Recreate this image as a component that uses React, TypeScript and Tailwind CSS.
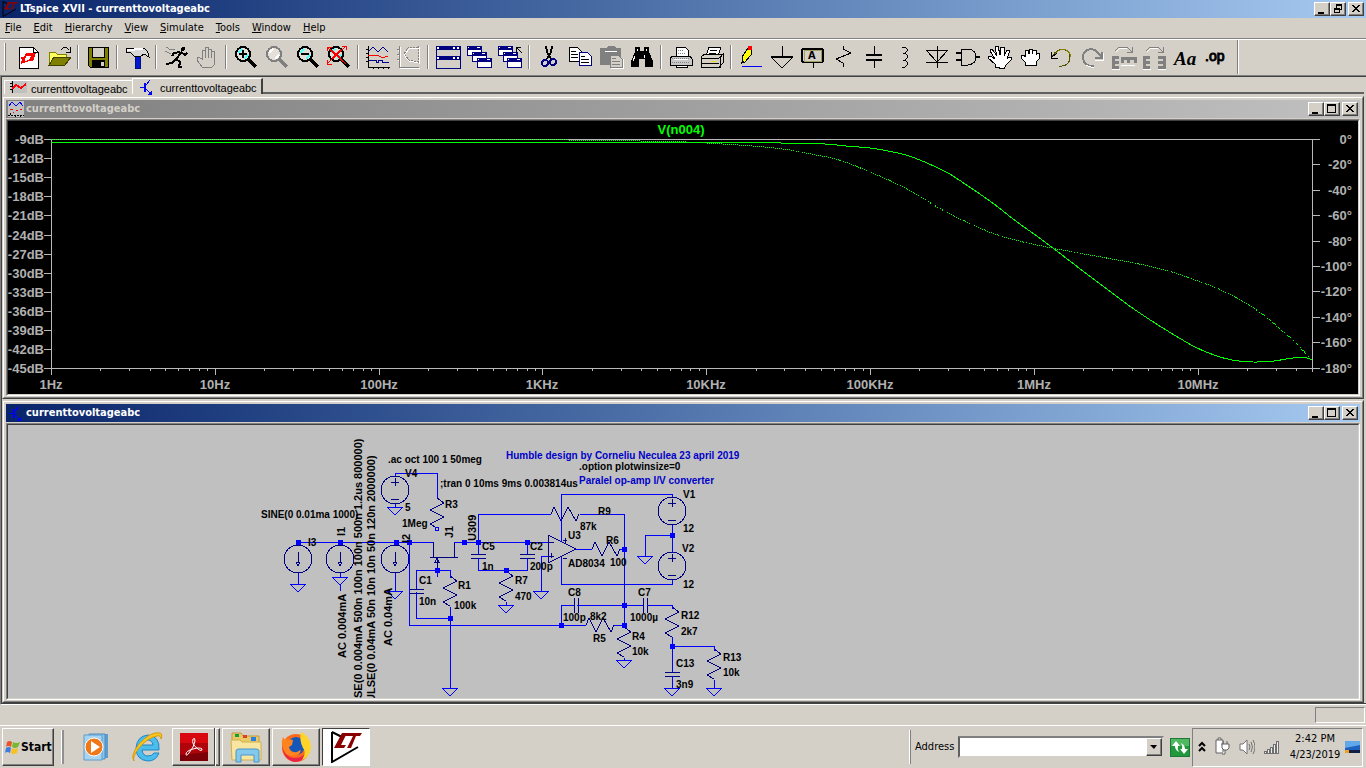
import type { ReactNode } from "react";

const raised =
  "bg-[#d4d0c8] border border-t-white border-l-white border-r-[#404040] border-b-[#404040] shadow-[inset_-1px_-1px_0_#808080]";

const menuItems = ["File", "Edit", "Hierarchy", "View", "Simulate", "Tools", "Window", "Help"];

const Lens = ({ color = "#000", tint = "#5ff", children }: { color?: string; tint?: string; children?: ReactNode }) => (
  <>
    <circle cx="9" cy="9" r="7" fill="#e4e0d8" stroke={color} strokeWidth="2" />
    <path d="M4 8l4-4M10 14l4-4" stroke={tint} strokeWidth="2" />
    <path d="M14 14l8 8" stroke={color} strokeWidth="3" />
    {children}
  </>
);

const miniWindow = (x: number, y: number) => (
  <g key={`${x}-${y}`}>
    <rect x={x} y={y} width="14" height="9" fill="#fff" stroke="#000080" />
    <path d={`M${x} ${y + 2}h14`} stroke="#000080" strokeWidth="3" />
    <path d={`M${x + 1} ${y + 1}h1M${x + 10} ${y + 1}h3`} stroke="#fff" />
  </g>
);

type Tool = { label: string; icon: ReactNode };

const toolGroups: Tool[][] = [
  [
    {
      label: "New Schematic",
      icon: (
        <>
          <path d="M3 2h14l5 5v16H3z" fill="#fff" stroke="#000" />
          <path d="M17 2v5h5" fill="none" stroke="#000" />
          <path d="M10 8h10l-3 8h-4l-8 3 1-5-2-1 5-2z" fill="#f00" />
          <path d="M10 11h5l-2 4-4 1z" fill="#fff" />
        </>
      ),
    },
    {
      label: "Open",
      icon: (
        <>
          <path d="M2 18V7h6l2 2h9v4" fill="#ffff60" stroke="#808000" />
          <path d="M2 20l5-8h17l-6 8z" fill="#808000" stroke="#404000" />
          <path d="M14 5q4-5 8 0M23 2v5h-4" fill="none" stroke="#000" />
        </>
      ),
    },
  ],
  [
    {
      label: "Save",
      icon: (
        <>
          <path d="M2 2h20v20H4l-2-2z" fill="#808000" stroke="#000" />
          <path d="M6 2h12v10H6z" fill="#d4d0c8" stroke="#000" />
          <path d="M6 15h13v7H6z" fill="#000" />
          <path d="M15 17h3v4h-3z" fill="#d4d0c8" />
        </>
      ),
    },
  ],
  [
    {
      label: "Control Panel",
      icon: (
        <>
          <path d="M10 11h5v12h-5z" fill="#0018d0" stroke="#001080" />
          <path d="M1 4l3-1h12q7 0 8 9l-5-3-3 2H9L5 7 1 8z" fill="#d8d8d8" stroke="#000" />
          <path d="M2 5h6l3-1h7" stroke="#fff" strokeWidth="2" fill="none" />
        </>
      ),
    },
  ],
  [
    {
      label: "Run",
      icon: (
        <>
          <circle cx="19" cy="4" r="2" fill="#000" />
          <path d="M17 7l-5 8M17 7l4 3 2-2M16 7l-6 1-2 3" fill="none" stroke="#000" strokeWidth="2" />
          <path d="M12 14l-4 4-6 1M12 14l4 3-1 5h3" fill="none" stroke="#000" strokeWidth="2" />
          <path d="M2 2l5 3 4-1M1 6l6 3" fill="none" stroke="#808080" />
        </>
      ),
    },
    {
      label: "Halt",
      icon: (
        <path
          d="M7 22l-5-7 1-3 4 2V5h3V2h3v2h3v2h3v14l-2 2zM10 5v8M13 4v9M16 6v7"
          fill="#d4d0c8"
          stroke="#808080"
        />
      ),
    },
  ],
  [
    {
      label: "Zoom In",
      icon: (
        <Lens>
          <path d="M5 9h8M9 5v8" stroke="#000" strokeWidth="2" />
        </Lens>
      ),
    },
    { label: "Pan", icon: <Lens color="#808080" tint="#fff" /> },
    {
      label: "Zoom Out",
      icon: (
        <Lens>
          <path d="M5 9h8" stroke="#000" strokeWidth="2" />
        </Lens>
      ),
    },
    {
      label: "Zoom Full Extents",
      icon: (
        <Lens>
          <path d="M0 2l19 17M19 1L0 19M0 6V2h5M0 15v4h5M15 1h4v4" stroke="#f00" fill="none" />
          <path d="M5 6l9 8M14 5l-9 9" stroke="#f00" strokeWidth="2" />
        </Lens>
      ),
    },
  ],
  [
    {
      label: "Autorange",
      icon: (
        <>
          <path d="M2 1v21h22M0 4h2M0 8h2M0 12h2M0 16h2M7 22v2M12 22v2M17 22v2M22 22v2" fill="none" stroke="#000" />
          <path d="M2 7l5-5 5 5 5-5 5 5" fill="none" stroke="#00008b" />
          <path d="M2 10h9l4 2h4l3-1" fill="none" stroke="#f00" />
          <path d="M3 15h7v2h2v-2h4v2h7" fill="none" stroke="#00008b" />
        </>
      ),
    },
    {
      label: "Pick Visible Traces",
      icon: (
        <>
          <path d="M3 2v21h20M1 5h2M1 10h2M1 15h2M8 22v2M13 22v2M18 22v2" fill="none" stroke="#fff" />
          <path d="M2 1v21h20M0 4h2M0 9h2M0 14h2" fill="none" stroke="#808080" />
          <path d="M22 3L12 4l-5 6 5 6 10 2zM22 3v15" fill="none" stroke="#fff" />
          <path d="M21 2L11 3l-4 6 5 6 9 2z" fill="none" stroke="#808080" strokeDasharray="2 1" />
        </>
      ),
    },
  ],
  [
    {
      label: "Tile Windows",
      icon: (
        <>
          <path d="M0 1h24v22H0z" fill="#d4d0c8" stroke="#000080" />
          <path d="M0 3h24M0 13h24" stroke="#000080" strokeWidth="4" />
          <path d="M1 3h2M17 3h2M21 3h2M1 13h2M17 13h2M21 13h2" stroke="#fff" strokeWidth="2" />
        </>
      ),
    },
    { label: "Cascade Windows", icon: <>{[miniWindow(0, 1), miniWindow(5, 7), miniWindow(10, 13)]}</> },
    {
      label: "Close All Windows",
      icon: (
        <>
          {[miniWindow(0, 1), miniWindow(5, 7), miniWindow(9, 13)]}
          <path d="M24 8l-6-6M18 7V2h5" stroke="#000" strokeWidth="1" fill="none" />
        </>
      ),
    },
  ],
  [
    {
      label: "Cut",
      icon: (
        <>
          <path d="M9 1l1 6 4 7M15 1l-1 6-4 7" fill="none" stroke="#000" strokeWidth="2" />
          <ellipse cx="8" cy="18" rx="3" ry="3" fill="none" stroke="#000080" strokeWidth="2" />
          <ellipse cx="16" cy="17" rx="3" ry="3" fill="none" stroke="#000080" strokeWidth="2" />
        </>
      ),
    },
    {
      label: "Copy",
      icon: (
        <>
          <path d="M1 2h8l4 4v10H1z" fill="#fff" stroke="#000" />
          <path d="M3 6h5M3 9h7M3 12h7" stroke="#000" />
          <path d="M11 7h8l4 4v9H11z" fill="#fff" stroke="#000080" />
          <path d="M13 11h4M13 14h8M13 17h8" stroke="#000" />
        </>
      ),
    },
    {
      label: "Paste",
      icon: (
        <>
          <path d="M1 3h6l2-2h6l2 2h5v17H1z" fill="#808080" />
          <path d="M6 6h12" stroke="#fff" strokeWidth="1" />
          <path d="M11 10h8l4 4v8H11z" fill="#d4d0c8" stroke="#808080" />
          <path d="M13 13h4M13 16h8M13 19h8" stroke="#808080" />
          <path d="M12 23h12V14" stroke="#fff" fill="none" />
        </>
      ),
    },
    {
      label: "Find",
      icon: (
        <>
          <path d="M5 2h5v4h4V2h5v5l4 9v6h-8v-8h-6v8H1v-6l4-9z" fill="#000" />
          <path d="M7 4v2M16 4v2M5 11l-2 5M14 10l1 3" stroke="#fff" />
        </>
      ),
    },
  ],
  [
    {
      label: "Print Setup",
      icon: (
        <>
          <path d="M7 11V2h9l3 3v6" fill="#fff" stroke="#000" />
          <path d="M3 11h18l2 3v6H1v-6z" fill="#c8c8c8" stroke="#000" />
          <path d="M5 14h14v1H5z" fill="#fff" />
          <path d="M7 20h11v2H7z" fill="#fff" stroke="#000" />
          <path d="M9 5h6M9 8h8M3 13h18M3 17h18" stroke="#808080" strokeDasharray="1 1" />
        </>
      ),
    },
    {
      label: "Print",
      icon: (
        <>
          <path d="M6 11l3-9h12l-3 9z" fill="#fff" stroke="#000" />
          <path d="M10 5h7M9 8h7" stroke="#000" />
          <path d="M1 12l4-3h18l-3 4v9H1z" fill="#d4d0c8" stroke="#000" />
          <path d="M1 13h18l4-4v9l-4 4M1 18h18" fill="none" stroke="#000" />
          <path d="M11 16h5" stroke="#e8e000" />
        </>
      ),
    },
  ],
  [
    {
      label: "Draw Wire",
      icon: (
        <>
          <path d="M3 18v-6l6-9 4 2-1 5-6 7z" fill="#ff0" stroke="#000" />
          <path d="M9 1h4v4H9z" fill="#f00" />
          <path d="M2 19l1-4 3 2z" fill="#000" />
          <path d="M3 21h20" stroke="#00f" />
        </>
      ),
    },
    {
      label: "Place Ground",
      icon: (
        <>
          <path d="M12 1v11M1 12l11 11 11-11" fill="none" stroke="#000" />
          <path d="M1 12h22" stroke="#000" strokeWidth="2" />
        </>
      ),
    },
    {
      label: "Label Net",
      icon: (
        <>
          <path d="M2 4h19l1 1v11l-1 1H2l-1-1V5z" fill="#d4d0c8" stroke="#000" strokeWidth="2" />
          <path d="M3 5h17v11H3z" fill="none" stroke="#a0a060" />
          <path d="M12 18v5" stroke="#000" />
          <text x="7" y="14" fontSize="11" fontWeight="bold">A</text>
        </>
      ),
    },
    {
      label: "Resistor",
      icon: <path d="M11 1v3l8 4L4 14l7 4v4" fill="none" stroke="#000" />,
    },
    {
      label: "Capacitor",
      icon: (
        <>
          <path d="M11 1v10M11 15v8" stroke="#000" />
          <path d="M3 10h16M3 15h16" stroke="#000" strokeWidth="2" />
        </>
      ),
    },
    {
      label: "Inductor",
      icon: <path d="M8 2h3q5 3 0 6H9h2q5 3 0 7H9h2q5 3 0 7H8" fill="none" stroke="#000" strokeWidth="1" />,
    },
    {
      label: "Diode",
      icon: <path d="M12 1v22M1 5h22L12 17zM1 17h22" fill="none" stroke="#000" />,
    },
    {
      label: "Component",
      icon: (
        <>
          <path d="M5 4h7q8 1 8 8t-8 8H5z" fill="none" stroke="#000" strokeWidth="1" />
          <path d="M0 8h5M0 15h5M19 12h5" stroke="#000" strokeWidth="2" />
        </>
      ),
    },
    {
      label: "Move",
      icon: (
        <path
          d="M8 22v-3L1 13v-2h3l4 3-5-8V4h2l5 7-2-8 1-2h2l2 9 1-8h3v9l3-6h2v3l-2 6 2-2h2v3l-5 5-2 4z"
          fill="#fff"
          stroke="#000"
        />
      ),
    },
    {
      label: "Drag",
      icon: (
        <path
          d="M7 20v-3l-4-4v-3h3l1 2V6l1-1h2l1 4V4h3v5l1-4h3v5l1-2h2v6l-3 3v3zM7 20h11"
          fill="#fff"
          stroke="#000"
        />
      ),
    },
    {
      label: "Undo",
      icon: (
        <>
          <path d="M3 12q4-8 11-8 8 2 7 10-2 8-11 7" fill="none" stroke="#505000" />
          <path d="M5 10q5-6 10-6 6 2 7 8" fill="none" stroke="#808000" />
          <path d="M2 7v6h7M3 12l5-4" fill="none" stroke="#000" />
        </>
      ),
    },
    {
      label: "Redo",
      icon: (
        <>
          <path d="M21 12q-4-8-11-8-8 2-7 10 2 8 11 7" fill="none" stroke="#808080" strokeWidth="2" />
          <path d="M22 7v6h-7" fill="none" stroke="#808080" strokeWidth="2" />
          <path d="M15 15h8V8M6 20q4 3 8 2" fill="none" stroke="#fff" />
        </>
      ),
    },
    {
      label: "Rotate",
      icon: (
        <>
          <path d="M4 6l4-4h8l5 5M21 2v5h-5" fill="none" stroke="#808080" />
          <path d="M8 12H2v10h6M2 17h6M11 18v-5h13v5M17 13v5" fill="none" stroke="#808080" strokeWidth="3" />
          <path d="M1 24h8M10 20h14M5 7l4-4h7" stroke="#fff" fill="none" />
        </>
      ),
    },
    {
      label: "Mirror",
      icon: (
        <>
          <path d="M4 6l4-4h8l5 5M21 2v5h-5" fill="none" stroke="#808080" />
          <path d="M8 12H2v10h6M2 17h6M16 12h6v10h-6M22 17h-6" fill="none" stroke="#808080" strokeWidth="3" />
          <path d="M1 24h8M16 24h8M5 7l4-4h7" stroke="#fff" fill="none" />
        </>
      ),
    },
    {
      label: "Text",
      icon: (
        <text x="1" y="20" fontSize="19" fontWeight="bold" fontStyle="italic" fontFamily="Liberation Serif, serif">
          Aa
        </text>
      ),
    },
    {
      label: "SPICE Directive",
      icon: (
        <text x="1" y="16" fontSize="14" stroke="#000" fontFamily="Liberation Sans, sans-serif">
          .op
        </text>
      ),
    },
  ],
];

const Divider = () => (
  <div className="w-2 flex justify-center">
    <div className="w-[2px] h-6 border-l border-l-[#808080] border-r border-r-white" />
  </div>
);

const Toolbar = () => (
  <div className="flex items-center h-[35px] border-t border-t-white">
    <div className="w-3 flex pl-1">
      <div className="w-[2px] h-7 border-l border-l-white border-r border-r-[#808080]" />
    </div>
    {toolGroups.map((group, index) => (
      <div key={index} className="flex items-center">
        {index > 0 && <Divider />}
        {group.map((tool) => (
          <button key={tool.label} title={tool.label} aria-label={tool.label} className="w-[31px] flex justify-center">
            <svg className="w-6 h-6 overflow-visible" viewBox="0 0 24 24" shapeRendering="crispEdges">
              {tool.icon}
            </svg>
          </button>
        ))}
      </div>
    ))}
    <div className="ml-[6px] w-[2px] self-stretch border-l border-l-[#808080] border-r border-r-white" />
  </div>
);

const CaptionButtons = ({ restore = false }: { restore?: boolean }) => {
  const style = `${raised} w-4 h-[14px] flex items-center justify-center`;
  return (
    <div className="flex items-center pr-[2px]">
      <button aria-label="Minimize" className={style}>
        <svg className="w-3 h-3" viewBox="0 0 12 12" shapeRendering="crispEdges">
          <path d="M2 9h6v2H2z" />
        </svg>
      </button>
      <button aria-label={restore ? "Restore" : "Maximize"} className={style}>
        <svg className="w-3 h-3" viewBox="0 0 12 12" shapeRendering="crispEdges">
          {restore ? (
            <path d="M4 1h6v6H8v3H2V5h2zM5 3v2h3v1h1V3zM3 7v2h4V7z" fillRule="evenodd" />
          ) : (
            <path d="M1 1h9v9H1zM2 3v6h7V3z" fillRule="evenodd" />
          )}
        </svg>
      </button>
      <button aria-label="Close" className={`${style} ml-[2px]`}>
        <svg className="w-3 h-3" viewBox="0 0 12 12" shapeRendering="crispEdges">
          <path d="M2 2l7 7M3 2l7 7M9 2L2 9M10 2L3 9" stroke="#000" />
        </svg>
      </button>
    </div>
  );
};

const LtLogo = ({ className }: { className: string }) => (
  <svg className={className} viewBox="0 0 32 32">
    <path d="M2 1v30l26-15M2 1l10 5" fill="none" stroke="#000" strokeWidth="2" />
    <path d="M12 2h5l-6 12h5l-2 3H4zM16 2h16l-2 3h-4l-5 12h-4l6-12h-8z" fill="#8b0000" />
  </svg>
);

const TransistorIcon = () => (
  <svg className="w-4 h-4" viewBox="0 0 16 16" shapeRendering="crispEdges">
    <path d="M1 8h4M7 6l4-5M7 10l4 4" stroke="#00f" fill="none" />
    <path d="M5 4h2v9H5zM13 16H8l5-5z" fill="#00f" />
  </svg>
);

const WaveIcon = () => (
  <svg className="w-4 h-4" viewBox="0 0 16 16" shapeRendering="crispEdges">
    <path d="M0 0h16v16H0z" fill="#c0c0c0" />
    <path d="M1 5l3-4 4 4 4-4 3 4" fill="none" stroke="#00f" />
    <path d="M2 8h3M8 9h2M12 8h2M5 11h1" stroke="#f00" />
    <path d="M0 14h16M2 12v3M7 14v2M12 14v2" stroke="#000" strokeDasharray="2 1" />
  </svg>
);

type ChildWindowProps = { title: string; active?: boolean; icon: ReactNode; children: ReactNode };

const ChildWindow = ({ title, active = false, icon, children }: ChildWindowProps) => (
  <section className="border border-t-[#d4d0c8] border-l-[#d4d0c8] border-r-[#404040] border-b-[#404040]">
    <div className="border border-t-white border-l-white border-r-[#808080] border-b-[#808080] px-[2px] pt-[2px] pb-px">
      <header
        className={`flex items-center h-[18px] pl-[2px] mb-px font-bold bg-gradient-to-r ${
          active ? "from-[#0a246a] to-[#a6caf0] text-white" : "from-[#808080] to-[#c0c0c0] text-[#d4d0c8]"
        }`}
      >
        {icon}
        <h2 className="flex-1 pl-[2px]">{title}</h2>
        <CaptionButtons />
      </header>
      <div className="border border-t-[#808080] border-l-[#808080] border-r-white border-b-white">
        <div className="border border-t-[#404040] border-l-[#404040] border-r-[#d4d0c8] border-b-[#d4d0c8]">
          {children}
        </div>
      </div>
    </div>
  </section>
);

const decades = ["1Hz", "10Hz", "100Hz", "1KHz", "10KHz", "100KHz", "1MHz", "10MHz"];
const decibels = [-9, -12, -15, -18, -21, -24, -27, -30, -33, -36, -39, -42, -45];
const degrees = [0, -20, -40, -60, -80, -100, -120, -140, -160, -180];

const magnitude: [number, number][] = [
  [43, 22], [773, 22], [817, 23], [838, 25], [862, 27], [880, 30], [898, 34], [919, 42], [940, 52], [963, 67],
  [986, 83], [1009, 101], [1026, 113], [1045, 127], [1067, 144], [1095, 165], [1123, 186], [1150, 204],
  [1173, 218], [1187, 226], [1206, 234], [1224, 239], [1245, 241], [1266, 240], [1285, 237], [1299, 237],
  [1304, 239],
];
const phase: [number, number][] = [
  [43, 18], [560, 19], [632, 20], [678, 21], [715, 23], [745, 25], [775, 28], [803, 33], [831, 39], [862, 51],
  [891, 64], [914, 77], [940, 92], [963, 103], [984, 112], [1007, 119], [1044, 127], [1076, 133], [1104, 138],
  [1136, 144], [1164, 151], [1190, 160], [1215, 170], [1239, 183], [1257, 195], [1273, 209], [1287, 221],
  [1299, 234], [1304, 240],
];

// Cubic segments with slopes taken from the neighbouring points
const smooth = (points: [number, number][]) =>
  points.reduce((d, [x, y], i) => {
    if (i === 0) return `M${x} ${y}`;
    const [px, py] = points[i - 1];
    const [bx, by] = points[Math.max(i - 2, 0)];
    const [nx, ny] = points[Math.min(i + 1, points.length - 1)];
    const third = (x - px) / 3;
    const startSlope = (y - by) / (x - bx);
    const endSlope = (ny - py) / (nx - px);
    return `${d}C${px + third} ${py + startSlope * third} ${x - third} ${y - endSlope * third} ${x} ${y}`;
  }, "");

const decadeX = (d: number) => Math.round(43 + d * 163.8);

const WaveformPlot = () => {
  const minorTicks = decades
    .flatMap((_, d) => [2, 3, 4, 5, 6, 7, 8, 9].map((n) => decadeX(d + Math.log10(n))))
    .filter((x) => x < 1304);
  return (
    <svg
      className="block w-full bg-black"
      viewBox="0 0 1350 273"
      role="img"
      aria-label="V(n004) magnitude and phase"
      fontFamily="Liberation Sans, Arial, sans-serif"
      fontSize="13"
      fontWeight="bold"
      fill="#b0b0b0"
    >
      <g stroke="#b8b8b8" fill="none" shapeRendering="crispEdges">
        <path d="M43 18h1269M43 18v236M36 247h1276M1304 18v233" />
        {decibels.map((db, i) => (
          <path key={db} d={`M36 ${Math.round(18 + i * 19.1)}h7`} />
        ))}
        {degrees.map((deg, i) => (
          <path key={deg} d={`M1304 ${Math.round(18 + i * 25.4)}h8`} />
        ))}
        {decades.map((hz, i) => (
          <path key={hz} d={`M${decadeX(i)} 247v7`} />
        ))}
        {minorTicks.map((x) => (
          <path key={x} d={`M${x} 247v3`} />
        ))}
      </g>
      <g fill="none" stroke="#0f0" shapeRendering="crispEdges">
        <path d={smooth(phase)} strokeDasharray="1 1" />
        <path d={smooth(magnitude)} />
      </g>
      <text x="673" y="13" textAnchor="middle" fill="#0f0">V(n004)</text>
      {decibels.map((db, i) => (
        <text key={db} x="36" y={Math.round(23 + i * 19.1)} textAnchor="end">{db}dB</text>
      ))}
      {degrees.map((deg, i) => (
        <text key={deg} x="1344" y={Math.round(23 + i * 25.4)} textAnchor="end">{deg}°</text>
      ))}
      {decades.map((hz, i) => (
        <text key={hz} x={decadeX(i)} y="268" textAnchor="middle">{hz}</text>
      ))}
    </svg>
  );
};

const wires = [
  "M298 542h135M454 542h94M409 542v83h177M478 542v-28h73M580 514h44v111",
  "M395 476v-3h42v25M437 570v7M416 570h34v8M416 570v19M416 592v26h34M450 607v81",
  "M478 542v12M478 558v12h49v-12M527 542v12M541 556h7M541 556v35",
  "M561 542v-48h111v3M561 557v27h111v-4M672 525v28M672 535h-27v21",
  "M576 549h16M620 549h4M561 625v-20h13M577 605h66M647 605h25v4M614 625h10",
  "M672 637v35M672 646h42v5M672 676v12M714 680v8M624 658v2M340 585v6",
  "M298 573v11M340 573v4M395 573v18M395 504v3M506 602v3",
];

const junctions = [
  [298, 542], [340, 542], [396, 542], [409, 542], [464, 542], [478, 542], [527, 542], [437, 570], [450, 618],
  [506, 570], [624, 549], [624, 605], [624, 625], [561, 625], [672, 535], [672, 646],
];

const grounds = [
  [298, 584], [340, 577], [395, 591], [395, 507], [450, 688], [506, 605], [541, 591], [645, 556], [624, 660],
  [672, 688], [714, 688],
];

const verticalResistors = [[437, 498], [450, 576], [506, 571], [672, 607], [624, 627], [714, 649]];
const horizontalResistors = [[551, 514], [592, 549], [586, 625]];
const currentSources = [[298, 559], [340, 559], [395, 559]];
const voltageSources = [[395, 490], [672, 511], [672, 566]];

const labels: [number, number, string][] = [
  [388, 463, ".ac oct 100 1 50meg"],
  [579, 470, ".option plotwinsize=0"],
  [440, 487, ";tran 0 10ms 9ms 0.003814us"],
  [261, 518, "SINE(0 0.01ma 1000)"],
  [405, 477, "V4"],
  [405, 511, "5"],
  [445, 508, "R3"],
  [402, 527, "1Meg"],
  [308, 546, "I3"],
  [419, 584, "C1"],
  [419, 605, "10n"],
  [458, 589, "R1"],
  [454, 609, "100k"],
  [482, 550, "C5"],
  [482, 570, "1n"],
  [530, 550, "C2"],
  [530, 570, "200p"],
  [515, 584, "R7"],
  [515, 600, "470"],
  [598, 515, "R9"],
  [580, 530, "87k"],
  [568, 539, "U3"],
  [568, 567, "AD8034"],
  [606, 544, "R6"],
  [610, 566, "100"],
  [683, 498, "V1"],
  [683, 532, "12"],
  [682, 552, "V2"],
  [683, 588, "12"],
  [568, 596, "C8"],
  [563, 621, "100p"],
  [590, 620, "8k2"],
  [593, 642, "R5"],
  [638, 596, "C7"],
  [630, 621, "1000µ"],
  [632, 640, "R4"],
  [632, 655, "10k"],
  [681, 619, "R12"],
  [681, 635, "2k7"],
  [723, 661, "R13"],
  [723, 676, "10k"],
  [676, 667, "C13"],
  [676, 688, "3n9"],
];

const rotatedLabels: [number, number, string][] = [
  [345, 536, "I1"],
  [410, 543, "I2"],
  [453, 538, "J1"],
  [476, 541, "U309"],
  [346, 658, "AC 0.004mA"],
  [392, 646, "AC 0.04mA"],
  [362, 698, "SE(0 0.004mA 500n 100n 100n 500n 1.2us 800000)"],
  [375, 702, "ULSE(0 0.04mA 50n 10n 10n 50n 120n 2000000)"],
];

const Schematic = () => (
  <svg
    className="block w-full bg-[#c0c0c0]"
    viewBox="8 425 1350 273"
    role="img"
    aria-label="Current to voltage converter schematic"
    fontFamily="Liberation Sans, Arial, sans-serif"
    fontSize="10"
    fontWeight="bold"
  >
    <g stroke="#000080" fill="none" shapeRendering="crispEdges">
      {verticalResistors.map(([x, y]) => (
        <path key={`${x}-${y}`} d={`M${x} ${y}l7 5-14 7 14 7-14 7 7 4`} />
      ))}
      {horizontalResistors.map(([x, y]) => (
        <path key={`${x}-${y}`} d={`M${x} ${y}l3-7 7 14 7-14 8 14 3-7`} />
      ))}
      {currentSources.map(([x, y]) => (
        <g key={x}>
          <circle cx={x} cy={y} r="14" />
          <path d={`M${x} ${y - 13}v-4M${x} ${y - 7}v10M${x - 2} ${y + 3}h4l-2 4z`} />
        </g>
      ))}
      {voltageSources.map(([x, y]) => (
        <g key={`${x}-${y}`}>
          <circle cx={x} cy={y} r="14" />
          <path d={`M${x - 4} ${y - 8}h8M${x} ${y - 12}v8M${x - 4} ${y + 9}h8`} />
        </g>
      ))}
      <path d="M409 589h15M409 593h15M471 554h15M471 558h15M520 554h15M520 558h15M665 672h15M665 676h15" />
      <path d="M574 598v15M578 598v15M643 598v15M647 598v15" />
      <path d="M433 542v15M430 557h28M454 557v-15M437 557v13M435 562l2-4 2 4z" />
      <path d="M548 535v28l28-14zM549 542h5M549 556h5M551 553v5M563 540h4M565 538v5M563 558h4" />
    </g>
    <g stroke="#0000ff" fill="none" shapeRendering="crispEdges">
      {wires.map((d) => (
        <path key={d} d={d} />
      ))}
      {grounds.map(([x, y]) => (
        <path key={`${x}-${y}`} d={`M${x - 8} ${y}h16l-8 8z`} />
      ))}
      <rect x="435" y="527" width="3" height="3" />
      {junctions.map(([x, y]) => (
        <rect key={`${x}-${y}`} x={x - 2} y={y - 2} width="4" height="4" fill="#00f" />
      ))}
    </g>
    {labels.map(([x, y, text]) => (
      <text key={`${x}-${y}`} x={x} y={y}>{text}</text>
    ))}
    <g fontSize="11">
      {rotatedLabels.map(([x, y, text]) => (
        <text key={text} transform={`translate(${x} ${y}) rotate(-90)`}>{text}</text>
      ))}
    </g>
    <g fill="#0000c8">
      <text x="506" y="459">Humble design by Corneliu Neculea 23 april 2019</text>
      <text x="579" y="484">Paralel op-amp I/V converter</text>
    </g>
  </svg>
);

const MediaPlayerIcon = () => (
  <svg className="w-8 h-8" viewBox="0 0 32 32">
    <path d="M12 3h15v24H12z" fill="#5d9ccc" />
    <path d="M8 3h16v25H8z" fill="#8fc4e8" stroke="#4a8cc0" />
    <path d="M3 4h18v25H3z" fill="#a9d4f0" stroke="#5a9cd0" />
    <circle cx="13" cy="16" r="9" fill="#f07818" stroke="#fff" />
    <path d="M10 10l9 6-9 6z" fill="#fff" />
  </svg>
);

const ExplorerEIcon = () => (
  <svg className="w-8 h-8" viewBox="0 0 32 32">
    <path
      d="M28 19H11q1 6 6 6 4 0 6-3h5q-3 8-11 8-12-1-12-13Q6 5 17 4q12 1 11 15zM11 14h11q-1-5-5-5-5 0-6 5z"
      fill="#4bbdec"
      stroke="#1c86c8"
      fillRule="evenodd"
    />
    <path d="M3 30Q-1 25 8 13 20 0 29 2q3 1 1 6 0-4-4-3Q16 7 8 17q-7 9-5 13z" fill="#f8c820" stroke="#d89808" />
  </svg>
);

const AcrobatIcon = () => (
  <svg className="w-7 h-7" viewBox="0 0 28 28">
    <path d="M0 0h28v28H0z" fill="#7c0008" />
    <path d="M0 0h28v19L0 22z" fill="#b0040c" />
    <path d="M0 0h28v10H0z" fill="#d8080e" />
    <path
      d="M6 21q0-3 7-5 7-2 9 0 0 3-4 0-7-5-5-10 2-2 2 2-1 6-6 12-3 4-3 1z"
      fill="none"
      stroke="#fff"
      strokeWidth="1"
    />
  </svg>
);

const FoldersIcon = () => (
  <svg className="w-8 h-8" viewBox="0 0 32 32">
    <path d="M2 2h9l2 3h16v22H2z" fill="#e9c967" stroke="#c09a3c" />
    <path d="M5 3h4v3H5z" fill="#18a038" />
    <path d="M13 4h4v3h-4z" fill="#e04020" />
    <path d="M21 6h5v4h-5z" fill="#2880e0" />
    <path d="M1 9h9l2 2h19v18H2z" fill="#f8e6a0" stroke="#d0b050" />
    <path d="M6 31V20q0-2 3-2h17q3 0 3 2v11h-5v-7H11v7z" fill="#84c8ec" stroke="#4896c8" />
  </svg>
);

const FirefoxIcon = () => (
  <svg className="w-8 h-8" viewBox="0 0 32 32">
    <circle cx="16" cy="17" r="14" fill="#ff6a1a" />
    <circle cx="16" cy="15" r="9" fill="#1557b8" />
    <path d="M3 6q1 3 5 2l5 1-1 5-3 2q1 6 8 5 3-2 4-2-1 6-9 6Q3 24 2 15 1 10 3 6z" fill="#ff8420" />
    <path d="M2 14q2 12 12 13 8 0 12-5-2 9-12 9Q3 28 2 14z" fill="#e8244c" />
    <path d="M21 1q9 4 10 15-1 10-9 13 5-8 1-12-4-8-2-16z" fill="#ffd42a" />
  </svg>
);

const taskButton = `${raised} w-12 h-[38px] flex items-center justify-center`;

const Taskbar = () => (
  <footer className="flex items-center h-[43px] border-t border-t-white pl-[2px] pr-[3px]">
    <button className={`${raised} flex items-center w-[52px] h-[38px] pl-[2px] text-[12px] font-bold`}>
      <svg className="w-4 h-4 shrink-0" viewBox="0 0 16 16">
        <path d="M2 3q3-2 5 0L6 8Q3 6 1 8z" fill="#e8542c" />
        <path d="M8 3q3 2 7 0l-2 5q-3 2-6 0z" fill="#78b830" />
        <path d="M1 9q3-2 5 0l-1 5q-3-2-5 0z" fill="#3c7ce0" />
        <path d="M7 9q3 2 6 0l-1 5q-4 2-6 0z" fill="#f8c020" />
      </svg>
      Start
    </button>
    <div className="ml-[7px] w-[3px] h-[34px] border-l border-l-white border-r-2 border-r-[#909090]" />
    <button aria-label="Media Player" className="ml-[15px] w-9 flex justify-center">
      <MediaPlayerIcon />
    </button>
    <button aria-label="Internet Explorer" className="ml-[14px] w-9 flex justify-center">
      <ExplorerEIcon />
    </button>
    <div className="ml-[7px] flex gap-[2px]">
      <div className="relative">
        <button aria-label="Acrobat Reader" className={`${taskButton} pr-1`}>
          <AcrobatIcon />
        </button>
        <div className="absolute top-0 right-1 w-[2px] h-full border-l border-l-[#404040] border-r border-r-white" />
      </div>
      <button aria-label="Windows Explorer" className={taskButton}>
        <FoldersIcon />
      </button>
      <button aria-label="Firefox" className={taskButton}>
        <FirefoxIcon />
      </button>
      <button
        aria-label="LTspice"
        className="w-12 h-[38px] flex items-center justify-center bg-white border border-t-[#404040] border-l-[#404040] border-r-white border-b-white"
      >
        <LtLogo className="w-8 h-8" />
      </button>
    </div>
    <div className="ml-auto flex items-center">
      <div className="w-[2px] h-[34px] border-l border-l-white border-r border-r-[#808080]" />
      <label htmlFor="address" className="ml-1 w-[43px]">Address</label>
      <div className="flex w-[206px] h-[22px] bg-white border-2 border-t-[#808080] border-l-[#606060] border-r-[#d4d0c8] border-b-[#d4d0c8]">
        <input id="address" type="text" className="min-w-0 flex-1 px-1 outline-none" />
        <button aria-label="Show addresses" className={`${raised} w-4 h-[18px] flex items-center justify-center`}>
          <svg className="w-2 h-1" viewBox="0 0 8 4">
            <path d="M0 0h7L4 4z" />
          </svg>
        </button>
      </div>
      <button aria-label="Go" className="ml-[6px] w-5 h-[19px] border border-[#207838] bg-[#20983c]">
        <svg className="w-full h-full" viewBox="0 0 18 17">
          <path d="M0 0h18v7H0z" fill="#50b860" />
          <path d="M5 2L1 7h3q0 4 4 6-2-3-1-6h2zM13 15l4-5h-3q0-4-4-6 2 3 1 6H9z" fill="#fff" />
        </svg>
      </button>
      <div className="ml-[2px] flex items-center h-[39px] w-[171px] pl-[5px] border border-t-[#808080] border-l-[#808080] border-r-white border-b-white">
        <button aria-label="Show hidden icons" className="w-2">
          <svg className="w-2 h-3" viewBox="0 0 8 12" fill="none" stroke="#000">
            <path d="M1 5l3-3 3 3M1 10l3-3 3 3" strokeWidth="2" />
          </svg>
        </button>
        <svg className="ml-2 w-4 h-5" viewBox="0 0 16 20" fill="#fff" stroke="#606060">
          <path d="M2 3h7v13H2zM4 3V1h3v2" />
          <path d="M7 7h8v4l-2 2h-3l-2-2V7M9 7V4M13 7V4M11 13v4H8" />
        </svg>
        <svg className="ml-[9px] w-4 h-4" viewBox="0 0 16 16" fill="#fff" stroke="#707070">
          <path d="M1 5h3l4-4v14l-4-4H1z" />
          <path d="M10 5q2 3 0 6M12 3q3 5 0 10M14 1q4 7 0 14" fill="none" />
        </svg>
        <svg className="ml-2 w-4 h-4" viewBox="0 0 16 16" fill="#eee" stroke="#707070" shapeRendering="crispEdges">
          <path d="M1 12h2v2H1zM4 10h2v4H4zM7 8h2v6H7zM10 5h2v9h-2zM13 2h2v12h-2z" />
        </svg>
        <div className="ml-2 w-14 text-center leading-4">
          <p>2:42 PM</p>
          <p>4/23/2019</p>
        </div>
        <svg className="ml-px w-4 h-4 shrink-0" viewBox="0 0 16 16">
          <path d="M1 2h15v10H1z" fill="#2060c0" />
          <path d="M1 2h15v4L1 9z" fill="#60a8e8" />
          <path d="M2 11h14v3H4z" fill="#102040" />
          <path d="M1 11h4v3H1z" fill="#f0a020" />
        </svg>
      </div>
    </div>
  </footer>
);

export default function App() {
  return (
    <div className="w-full bg-[#d4d0c8] text-black text-[11px] leading-[14px] font-['DejaVu_Sans_Condensed','Noto_Sans',sans-serif] overflow-hidden">
      <header className="flex items-center h-[18px] pl-[2px] bg-gradient-to-r from-[#0a246a] to-[#a6caf0] text-white font-bold">
        <LtLogo className="w-4 h-4" />
        <h1 className="flex-1 pl-[2px]">LTspice XVII - currenttovoltageabc</h1>
        <CaptionButtons restore />
      </header>

      <nav className="flex items-center gap-3 h-[21px] pl-[5px] border-b border-b-[#808080]">
        {menuItems.map((item) => (
          <button key={item}>
            <span className="underline">{item[0]}</span>
            {item.slice(1)}
          </button>
        ))}
      </nav>

      <Toolbar />

      <main className="mt-px border-t border-l border-t-[#808080] border-l-[#808080] border-b border-b-white">
        <div className="border-t border-l border-b border-[#404040] pr-[2px]">
          <div className="flex items-end h-[17px]" role="tablist">
            <button
              role="tab"
              className="flex items-start w-[128px] h-[14px] ml-[2px] pl-1 border-t border-l border-white font-['Liberation_Sans',Arial,sans-serif]"
            >
              <svg className="w-[18px] h-3 mr-1 shrink-0" viewBox="0 0 18 12" shapeRendering="crispEdges">
                <path d="M2 0h16v12H2z" fill="#c0c0c0" />
                <path d="M3 0v12M1 2h2M1 5h2M1 8h2" stroke="#000" />
                <path d="M3 8l4-4 5 3 5-4" stroke="#f00" strokeWidth="2" fill="none" />
              </svg>
              <span className="pt-px">currenttovoltageabc</span>
            </button>
            <button
              role="tab"
              aria-selected="true"
              className="flex items-center w-[131px] h-4 pl-[6px] border-t border-l border-t-white border-l-white border-r-2 border-r-[#404040] font-['Liberation_Sans',Arial,sans-serif]"
            >
              <TransistorIcon />
              <span className="pl-[5px] pt-[2px]">currenttovoltageabc</span>
            </button>
            <div className="flex-1 self-stretch border-b-2 border-b-[#606060]" />
          </div>
          <div className="flex flex-col gap-px pt-[2px]">
            <ChildWindow title="currenttovoltageabc" icon={<WaveIcon />}>
              <WaveformPlot />
            </ChildWindow>
            <ChildWindow title="currenttovoltageabc" active icon={<TransistorIcon />}>
              <Schematic />
            </ChildWindow>
          </div>
        </div>
      </main>

      <div className="flex items-center justify-end h-5 pr-px">
        <div className="w-[50px] h-4 border border-t-[#808080] border-l-[#808080] border-r-white border-b-white" />
      </div>

      <Taskbar />
    </div>
  );
}
